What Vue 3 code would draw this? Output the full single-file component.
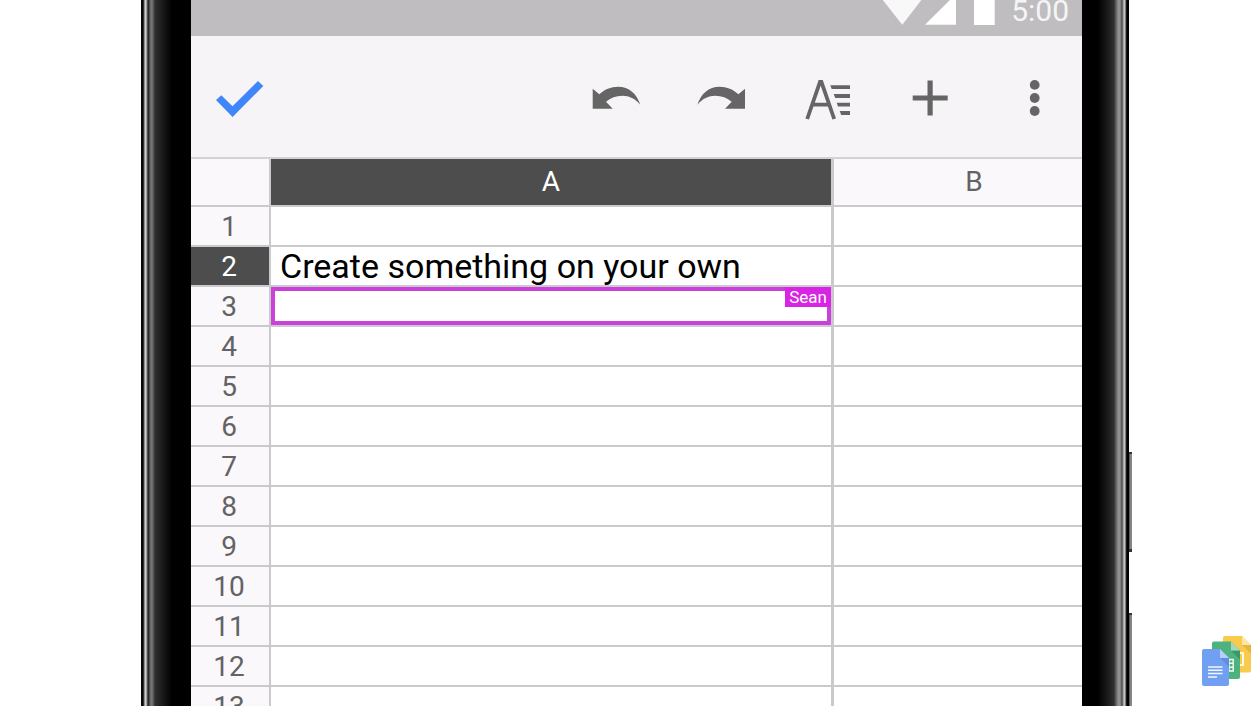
<script setup>
import { ref } from 'vue'

const rows = ref(
  Array.from({ length: 13 }, (_, i) => ({
    number: i + 1,
    text: i === 1 ? 'Create something on your own' : '',
    editor: i === 2 ? 'Sean' : '',
  })),
)
const activeRow = 2
</script>

<template>
  <main class="stage">
    <div class="phone">
      <div class="edge edge-left"></div>

      <div class="screen">
        <header class="status">
          <svg class="status-icons" viewBox="0 0 113 36" aria-hidden="true">
            <path d="M-4 -6H44L20.3 24.7Z" fill="#f8f8f8" />
            <path d="M43 24.7H74V-6Z" fill="#fff" />
            <rect x="92" y="-4" width="20.7" height="29" fill="#fff" />
          </svg>
          <time class="clock">5:00</time>
        </header>

        <nav class="toolbar" aria-label="Editing tools">
          <button class="tool done" type="button" aria-label="Done">
            <svg viewBox="0 0 60 61"><path d="M7 34L12.3 29.3L23.5 40.3L49 15L54.3 20L23.6 51Z" fill="#4086f8" /></svg>
          </button>
          <button class="tool" type="button" aria-label="Undo">
            <svg viewBox="0 0 60 61">
              <path d="M7.7 22.7L14.3 28.3C19 23.5 26 20.7 33 20.7C44 20.7 52 28 55.3 38.7C50 32.5 44 29.8 37.5 29.8C31 29.8 25.5 32 21 35.7L27.7 42.7H7.7Z" />
            </svg>
          </button>
          <button class="tool" type="button" aria-label="Redo">
            <svg viewBox="0 0 60 61">
              <path transform="translate(62.7 0) scale(-1 1)" d="M7.7 22.7L14.3 28.3C19 23.5 26 20.7 33 20.7C44 20.7 52 28 55.3 38.7C50 32.5 44 29.8 37.5 29.8C31 29.8 25.5 32 21 35.7L27.7 42.7H7.7Z" />
            </svg>
          </button>
          <button class="tool" type="button" aria-label="Format">
            <svg viewBox="0 0 60 61">
              <path d="M12.2 53L25 15.8H26.4L39.2 53M17 38.7H34.5" fill="none" stroke="#666566" stroke-width="3.8" />
              <path d="M35.3 19.3H55V23H36.7ZM38.7 28H55V32H40.2ZM41.7 36.7H55V40.4H43ZM44.7 45H55V49H46.2Z" />
            </svg>
          </button>
          <button class="tool" type="button" aria-label="Insert">
            <svg viewBox="0 0 60 61"><path d="M27.5 14.6H32.7V29.6H47.7V34.6H32.7V49.6H27.5V34.6H12.7V29.6H27.5Z" /></svg>
          </button>
          <button class="tool" type="button" aria-label="More options">
            <svg viewBox="0 0 60 61">
              <circle cx="29.7" cy="18.9" r="4.9" />
              <circle cx="29.7" cy="32" r="4.9" />
              <circle cx="29.7" cy="45" r="4.9" />
            </svg>
          </button>
        </nav>

        <table class="sheet">
          <colgroup>
            <col class="col-number" />
            <col class="col-a" />
            <col />
          </colgroup>
          <thead>
            <tr>
              <td class="corner"></td>
              <th class="active" scope="col">A</th>
              <th scope="col" class="head-b">B</th>
            </tr>
          </thead>
          <tbody>
            <tr v-for="row in rows" :key="row.number">
              <th scope="row" :class="{ active: row.number === activeRow }">{{ row.number }}</th>
              <td class="cell">
                {{ row.text }}
                <div v-if="row.editor" class="presence">
                  <span class="presence-name">{{ row.editor }}</span>
                </div>
              </td>
              <td></td>
            </tr>
          </tbody>
        </table>
      </div>

      <div class="edge edge-right"></div>
      <span class="side-key power"></span>
      <span class="side-key volume"></span>
    </div>

    <svg class="brand" viewBox="0 0 66 70" role="img" aria-label="Docs, Sheets and Slides">
      <path d="M35 11H52L61 20V45.500Q61 47.500 59 47.500H35Q33 47.500 33 45.500V13Q33 11 35 11Z" fill="#f8cb4c" />
      <path d="M52 20H61V29Z" fill="#e5b63f" />
      <path d="M52 11L61 20H52Z" fill="#fbe6a4" />
      <path d="M49 28H53V40H49Z" fill="none" stroke="#fff8e2" stroke-width="2" />
      <path d="M24 16.500H41L50 25.500V52Q50 54 48 54H24Q22 54 22 52V18.500Q22 16.500 24 16.500Z" fill="#4db27d" />
      <path d="M41 25.500H50V34.500Z" fill="#399866" />
      <path d="M41 16.500L50 25.500H41Z" fill="#a3d9bd" />
      <path d="M36 34.500H43.200V46H36M36 38.300H43M36 42.200H43M39 34V46" fill="none" stroke="#f2fbf6" stroke-width="1.400" />
      <path d="M14 24H30L39 33V59Q39 61 37 61H14Q12 61 12 59V26Q12 24 14 24Z" fill="#719ff2" />
      <path d="M30 33H39V42Z" fill="#608de0" />
      <path d="M30 24L39 33H30Z" fill="#b5cefa" />
      <path d="M18 42H32.500M18 45.300H32.500M18 48.600H32.500M18 52H27" stroke="#f4f7ff" stroke-width="1.500" />
    </svg>
  </main>
</template>

<style>
body {
  background: #fff;
}
</style>

<style scoped>
.stage {
  position: relative;
  display: flex;
  height: 100vh;
  padding: 0 127px 0 141px;
  box-sizing: border-box;
  overflow: hidden;
  background: #fff;
  font-family: Roboto, "Liberation Sans", sans-serif;
}

.phone {
  position: relative;
  display: flex;
  flex: 1;
  min-width: 0;
}

.edge {
  flex: none;
}

.edge-left {
  width: 50px;
  background: linear-gradient(90deg, #080808 0 2px, #555 3px, #ccc 4px 5px, #777 6px, #222 7px, #333 8px, #666 9px, #777 11px, #303030 14px, #242424 18px, #111 25px, #000 31px);
}

.edge-right {
  width: 47px;
  background: linear-gradient(270deg, #000 0 2px, #333 3px, #c4c4c4 4px 5px, #888 6px, #444 7px, #777 8px, #999 10px, #777 12px, #303030 15px, #222 19px, #111 25px, #000 31px);
}

.screen {
  flex: 1;
  min-width: 0;
  overflow: hidden;
  background: #fff;
}

.status {
  display: flex;
  justify-content: flex-end;
  gap: 16px;
  height: 36px;
  padding-right: 13px;
  background: #bfbdbf;
}

.status-icons {
  width: 113px;
  height: 36px;
}

.clock {
  font-size: 30px;
  line-height: 22px;
  color: #f6f5f6;
}

.toolbar {
  display: flex;
  gap: 11px;
  height: 121px;
  border-bottom: 2px solid #d2d1d3;
  background: #f6f4f7;
}

.tool {
  display: flex;
  align-items: center;
  justify-content: center;
  width: 94px;
  padding: 0;
  border: 0;
  background: none;
  cursor: pointer;
}

.tool svg {
  width: 60px;
  height: 61px;
  fill: #666566;
}

.done {
  width: 96px;
  margin-right: auto;
}

.sheet {
  width: 100%;
  table-layout: fixed;
  border-collapse: separate;
  border-spacing: 0;
}

.col-number {
  width: 80px;
}

.col-a {
  width: 563px;
}

th,
td {
  height: 38px;
  padding: 0;
  border-bottom: 2px solid #cac9cb;
}

tr > :first-child {
  border-right: 2px solid #cac9cb;
}

tr > :nth-child(2) {
  border-right: 3px solid #cac9cb;
}

th,
.corner {
  background: #faf8fb;
  font-size: 28px;
  font-weight: 400;
  line-height: 36px;
  color: #636264;
}

tbody th {
  height: 36px;
  padding: 2px 2px 0 0;
}

thead th,
.corner {
  height: 46px;
}

thead .head-b {
  padding-left: 32px;
}

th.active {
  background: #4d4d4d;
  color: #fff;
}

.cell {
  position: relative;
  padding-left: 9px;
  font-size: 34px;
  line-height: 38px;
  white-space: nowrap;
  color: #000;
}

.presence {
  position: absolute;
  inset: 0;
  border: 4px solid #cb40da;
}

.presence-name {
  position: absolute;
  top: -4px;
  right: -4px;
  padding: 0 4px;
  background: #d824e4;
  font-size: 17px;
  line-height: 20px;
  color: #fff;
}

.side-key {
  position: absolute;
  left: 100%;
  width: 3px;
  background: linear-gradient(90deg, #444, #999 2px, #777);
  border-top: 2px solid #333;
  box-sizing: border-box;
}

.power {
  top: 452px;
  height: 100px;
  border-bottom: 3px solid #333;
}

.volume {
  top: 613px;
  bottom: 0;
}

.brand {
  position: absolute;
  right: 0;
  bottom: 11px;
  width: 66px;
  height: 70px;
}
</style>
